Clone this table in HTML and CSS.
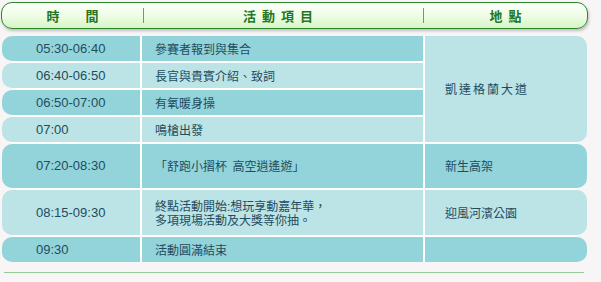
FILE: index.html
```html
<!DOCTYPE html>
<html lang="zh-Hant">
<head>
<meta charset="utf-8">
<title>活動流程</title>
<link rel="stylesheet" href="styles.css">
</head>
<body>
<div class="schedule">
  <div class="head">
    <div class="h-cell h-time">時　　間</div>
    <span class="sep"></span>
    <div class="h-cell h-act">活 動 項 目</div>
    <span class="sep"></span>
    <div class="h-cell h-loc">地 點</div>
  </div>
  <div class="grid">
    <div class="cell time dark">05:30-06:40</div>
    <div class="cell act dark">參賽者報到與集合</div>
    <div class="cell loc light span4"><span class="spaced">凱達格蘭大道</span></div>

    <div class="cell time light">06:40-06:50</div>
    <div class="cell act light">長官與貴賓介紹、致詞</div>

    <div class="cell time dark">06:50-07:00</div>
    <div class="cell act dark">有氧暖身操</div>

    <div class="cell time light">07:00</div>
    <div class="cell act light">鳴槍出發</div>

    <div class="cell time dark">07:20-08:30</div>
    <div class="cell act dark">「舒跑小摺杯&nbsp;&nbsp;高空逍遙遊」</div>
    <div class="cell loc dark">新生高架</div>

    <div class="cell time light">08:15-09:30</div>
    <div class="cell act light multi">終點活動開始:想玩享動嘉年華，<br>多項現場活動及大獎等你抽。</div>
    <div class="cell loc light">迎風河濱公園</div>

    <div class="cell time dark">09:30</div>
    <div class="cell act dark">活動圓滿結束</div>
    <div class="cell loc dark"></div>
  </div>
  <div class="rule"></div>
</div>
</body>
</html>
```

FILE: styles.css
```css
html, body {
  margin: 0;
  padding: 0;
  background: #f7f5f6;
}

body {
  font-family: "Liberation Sans", "Noto Sans CJK TC", sans-serif;
  color: #1f4c5e;
}

.schedule {
  padding-top: 2px;
  width: 601px;
}

.head {
  box-sizing: border-box;
  margin-left: 1px;
  width: 587px;
  height: 27px;
  border: 1px solid #2a862a;
  border-radius: 11px;
  background: linear-gradient(#fbfff9 0%, #eefde6 50%, #d6f5c6 100%);
  box-shadow: 1px 2px 3px rgba(0, 0, 0, 0.22);
  display: grid;
  grid-template-columns: 141px 1px 279px 1px 1fr;
  align-items: center;
}

.h-cell {
  text-align: center;
  font-family: "Noto Sans CJK TC", sans-serif;
  font-size: 13px;
  font-weight: bold;
  color: #237523;
  line-height: 16px;
}

.h-act {
  padding-right: 11px;
  word-spacing: 3px;
}

.h-loc {
  word-spacing: 3px;
}

.sep {
  display: block;
  width: 1px;
  height: 15px;
  background: #58b23a;
}

.grid {
  margin-top: 7px;
  margin-left: 2px;
  width: 585px;
  display: grid;
  grid-template-columns: 138px 281px 1fr;
  grid-template-rows: 25px 25px 25px 25px 44px 45px 25px;
  gap: 2px;
  background: linear-gradient(#fff, #fff) 10px 0 / calc(100% - 20px) 100% no-repeat;
}

.cell {
  display: flex;
  align-items: center;
  font-size: 12px;
  line-height: 16px;
}

.dark { background: #93d4da; }
.light { background: #bce3e5; }

.time {
  padding-left: 34px;
  font-size: 13px;
  border-radius: 10px 0 0 10px;
}

.act {
  padding-left: 13px;
  font-family: "Noto Sans CJK TC", sans-serif;
}

.act.multi {
  font-family: "Liberation Sans", "Noto Sans CJK TC", sans-serif;
  line-height: 14px;
  padding-top: 2px;
}

.loc {
  padding-left: 20px;
  font-family: "Noto Sans CJK TC", sans-serif;
  border-radius: 0 10px 10px 0;
}

.span4 {
  grid-row: span 4;
}

.spaced {
  letter-spacing: 2px;
}

.rule {
  margin-top: 10px;
  margin-left: 4px;
  width: 580px;
  height: 1px;
  background: #95c995;
}
```
